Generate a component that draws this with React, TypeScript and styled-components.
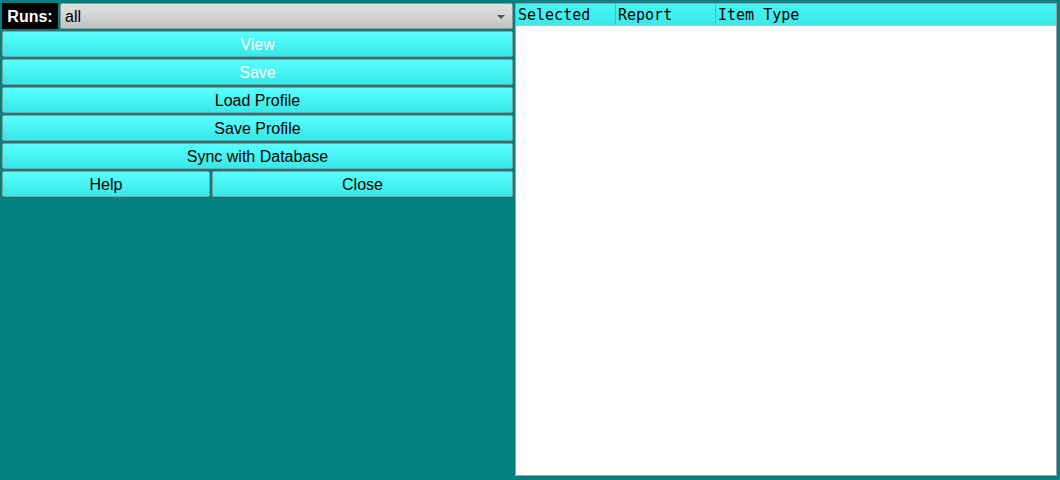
import React from "react";
import styled, { createGlobalStyle } from "styled-components";

const Global = createGlobalStyle`
  html, body { margin: 0; padding: 0; background: #008080; }
  body { width: 1060px; height: 480px; overflow: hidden; font-family: "Liberation Sans", Arial, sans-serif; }
`;

const Page = styled.div`
  display: flex;
  gap: 2px;
  padding: 3px 3px 4px 2px;
  height: 480px;
  box-sizing: border-box;
  background: #008080;
`;

const LeftColumn = styled.div`
  width: 511px;
  display: flex;
  flex-direction: column;
  gap: 2px;
`;

const Row = styled.div`
  display: flex;
  gap: 2px;
  height: 26px;
`;

const RunsLabel = styled.div`
  width: 56px;
  background: #000;
  color: #fff;
  font-weight: bold;
  font-size: 16px;
  display: flex;
  align-items: center;
  justify-content: center;
  padding-top: 1px;
  box-sizing: border-box;
`;

const Select = styled.div`
  flex: 1;
  position: relative;
  box-sizing: border-box;
  border: 1px solid #8a9a9a;
  border-radius: 2px;
  background: linear-gradient(#e2e2e2, #c2c2c2);
  display: flex;
  align-items: center;
  padding-left: 4px;
  padding-top: 1px;
  font-size: 16px;
  color: #000;
`;

const Arrow = styled.span`
  position: absolute;
  right: 7px;
  top: 11px;
  width: 0;
  height: 0;
  border-left: 4px solid transparent;
  border-right: 4px solid transparent;
  border-top: 4px solid #555;
`;

const Button = styled.button<{ $disabled?: boolean; $width?: number }>`
  flex: ${(p) => (p.$width ? `0 0 ${p.$width}px` : "1")};
  height: 26px;
  box-sizing: border-box;
  margin: 0;
  padding: 2px 0 0;
  border: 1px solid #8c9c9c;
  border-radius: 2px;
  background: linear-gradient(#58ffff, #38e8e8);
  color: ${(p) => (p.$disabled ? "#ffffff" : "#000000")};
  font-family: "Liberation Sans", Arial, sans-serif;
  font-size: 16px;
  cursor: default;
`;

const Panel = styled.div`
  flex: 1;
  box-sizing: border-box;
  background: #fff;
  border: 1px solid #a0a0a0;
  display: flex;
  flex-direction: column;
`;

const Header = styled.div`
  display: flex;
  height: 21px;
  background: linear-gradient(#48f4f4, #38eaea);
  border-bottom: 1px solid #a8c8c8;
`;

const HeaderCell = styled.div<{ $grow?: boolean }>`
  ${(p) => (p.$grow ? "flex: 1;" : "flex: 0 0 100px;")}
  box-sizing: border-box;
  border-right: ${(p) => (p.$grow ? "none" : "1px solid #2cc8c8")};
  padding-left: 2px;
  display: flex;
  align-items: center;
  font-family: "DejaVu Sans Mono", monospace;
  font-size: 15px;
  color: #000;
`;

export default function App() {
  return (
    <>
      <Global />
      <Page>
        <LeftColumn>
          <Row>
            <RunsLabel>Runs:</RunsLabel>
            <Select>
              all
              <Arrow />
            </Select>
          </Row>
          <Row>
            <Button $disabled>View</Button>
          </Row>
          <Row>
            <Button $disabled>Save</Button>
          </Row>
          <Row>
            <Button>Load Profile</Button>
          </Row>
          <Row>
            <Button>Save Profile</Button>
          </Row>
          <Row>
            <Button>Sync with Database</Button>
          </Row>
          <Row>
            <Button $width={208}>Help</Button>
            <Button>Close</Button>
          </Row>
        </LeftColumn>
        <Panel>
          <Header>
            <HeaderCell>Selected</HeaderCell>
            <HeaderCell>Report</HeaderCell>
            <HeaderCell $grow>Item Type</HeaderCell>
          </Header>
        </Panel>
      </Page>
    </>
  );
}
